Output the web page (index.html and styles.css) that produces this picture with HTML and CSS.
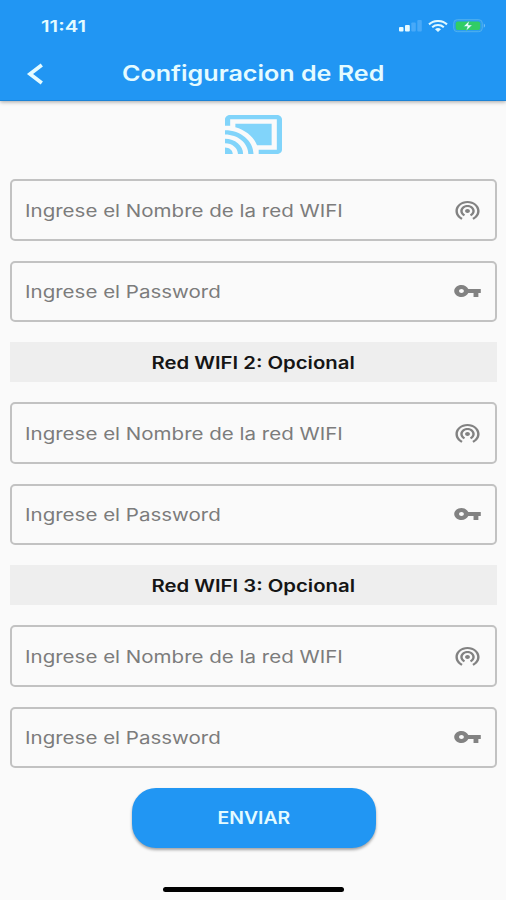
FILE: index.html
```html
<!DOCTYPE html>
<html lang="es">
<head>
<meta charset="utf-8">
<title>Configuracion de Red</title>
<link rel="stylesheet" href="styles.css">
</head>
<body>
<svg class="defs" width="0" height="0">
  <symbol id="tether" viewBox="0 0 24 24" preserveAspectRatio="none"><path d="M12 11c-1.1 0-2 .9-2 2s.9 2 2 2 2-.9 2-2-.9-2-2-2zm6 2c0-3.31-2.69-6-6-6s-6 2.69-6 6c0 2.22 1.21 4.15 3 5.190l1-1.740c-1.190-.7-2-1.970-2-3.450 0-2.210 1.790-4 4-4s4 1.790 4 4c0 1.480-.81 2.750-2 3.450l1 1.740c1.790-1.040 3-2.970 3-5.190zM12 3C6.480 3 2 7.480 2 13c0 3.700 2.010 6.920 4.990 8.650l1-1.730C5.610 18.530 4 15.960 4 13c0-4.420 3.580-8 8-8s8 3.580 8 8c0 2.960-1.610 5.530-4 6.920l1 1.730c2.990-1.730 5-4.950 5-8.650 0-5.520-4.480-10-10-10z"/></symbol>
  <symbol id="key" viewBox="0 0 24 24" preserveAspectRatio="none"><path d="M12.650 10C11.830 7.670 9.610 6 7 6c-3.310 0-6 2.690-6 6s2.690 6 6 6c2.610 0 4.830-1.670 5.650-4H17v4h4v-4h2v-4H12.650zM7 14c-1.100 0-2-.9-2-2s.9-2 2-2 2 .9 2 2-.9 2-2 2z"/></symbol>
</svg>
<div class="screen">
  <header class="appbar">
    <div class="status">
      <span class="time">11:41</span>
      <span class="indicators">
        <svg width="24" height="12" viewBox="0 0 24 12"><rect x="0" y="7" width="4.500" height="4.500" rx="1" fill="#e8faff"/><rect x="6" y="5" width="4.800" height="6.500" rx="1" fill="#e8faff"/><rect x="12.300" y="2.500" width="4.500" height="9" rx="1" fill="#48a9f8"/><rect x="18.300" y="0" width="4.500" height="11.500" rx="1" fill="#48a9f8"/></svg>
        <svg class="wifi" width="20" height="12" viewBox="0 0 20 12" fill="none" stroke="#e0f9ff" stroke-width="2.100"><path d="M1 4.400C6-.1 14-.1 19 4.400M4.200 7.200c3.300-2.900 8.300-2.900 11.600 0"/><path d="M7 9.200q3-2.200 6 0l-3 2.800z" fill="#e0f9ff" stroke="none"/></svg>
        <svg width="33" height="14" viewBox="0 0 33 14"><rect x=".7" y=".7" width="28.600" height="12" rx="3.500" fill="#2b9df0" stroke="#50b0ee"/><rect x="2.700" y="2.500" width="24.500" height="8.500" rx="2" fill="#31cd64"/><path d="M16.300 1.800 10.500 7.500h3.800l-1 4.300 6-5.900h-3.900z" fill="#e8fff8" stroke="#31b787" stroke-width=".5"/><path d="M30.800 4.600q2.500 2.100 0 4.200z" fill="#72c1f7"/></svg>
      </span>
    </div>
    <div class="nav">
      <svg class="back" width="18" height="22" viewBox="0 0 18 22"><path d="M15.800 2 4 11l11.800 9" fill="none" stroke="#e4fbff" stroke-width="3.700"/></svg>
      <h1 class="title">Configuracion de Red</h1>
    </div>
  </header>
  <main class="form">
    <svg class="cast" width="57" height="39" viewBox="1 3 22 18" preserveAspectRatio="none" fill="#81d4fa"><path d="M1 18v3h3c0-1.660-1.340-3-3-3zm0-4v2c2.760 0 5 2.240 5 5h2c0-3.870-3.130-7-7-7zm18-7H5v1.630c3.960 1.280 7.090 4.410 8.370 8.370H19V7zM1 10v2c4.970 0 9 4.030 9 9h2c0-6.080-4.930-11-11-11zm20-7H3c-1.100 0-2 .9-2 2v3h2V5h18v14h-7v2h7c1.100 0 2-.9 2-2V5c0-1.100-.9-2-2-2z"/></svg>
    <div class="field"><span class="hint">Ingrese el Nombre de la red WIFI</span><svg class="icon"><use href="#tether"/></svg></div>
    <div class="field"><span class="hint">Ingrese el Password</span><svg class="icon"><use href="#key"/></svg></div>
    <div class="band"><span class="label">Red WIFI 2: Opcional</span></div>
    <div class="field"><span class="hint">Ingrese el Nombre de la red WIFI</span><svg class="icon"><use href="#tether"/></svg></div>
    <div class="field"><span class="hint">Ingrese el Password</span><svg class="icon"><use href="#key"/></svg></div>
    <div class="band"><span class="label">Red WIFI 3: Opcional</span></div>
    <div class="field"><span class="hint">Ingrese el Nombre de la red WIFI</span><svg class="icon"><use href="#tether"/></svg></div>
    <div class="field"><span class="hint">Ingrese el Password</span><svg class="icon"><use href="#key"/></svg></div>
    <button class="send"><span class="send-label">ENVIAR</span></button>
  </main>
  <div class="home"></div>
</div>
</body>
</html>
```
FILE: styles.css
```css
* { box-sizing: border-box; }
body {
  margin: 0;
  background: #fafafa;
  font-family: Inter, "Liberation Sans", sans-serif;
}
.defs { display: block; }
.screen {
  height: 900px;
  display: flex;
  flex-direction: column;
  align-items: center;
  overflow: hidden;
}
.appbar {
  width: 100%;
  height: 101px;
  flex: none;
  background: #2196f3;
  border-bottom: 1px solid #1c83d6;
  box-shadow: 0 1px 4px rgba(0, 0, 0, .35);
  color: #e4fbff;
}
.status {
  height: 52px;
  padding: 0 20px 0 41px;
  display: flex;
  align-items: center;
  justify-content: space-between;
}
.time {
  font-size: 16px;
  font-weight: 600;
  transform: scaleX(1.27);
  transform-origin: left;
}
.indicators { display: flex; align-items: center; gap: 5px; }
.nav {
  height: 43px;
  padding-left: 26px;
  display: flex;
  align-items: center;
}
.title {
  margin: 1px 0 0 78px;
  font-size: 21px;
  line-height: 26px;
  font-weight: 600;
  white-space: nowrap;
  transform: scaleX(1.195);
  transform-origin: left;
}
.form {
  width: 100%;
  padding: 14px 9px 0 10px;
  display: flex;
  flex-direction: column;
  align-items: center;
}
.cast { margin-bottom: 25px; }
.field {
  width: 100%;
  height: 61.5px;
  margin-bottom: 20px;
  padding: 0 13px;
  display: flex;
  align-items: center;
  justify-content: space-between;
  border: 2px solid #c2c2c2;
  border-radius: 5px;
}
.hint {
  padding-top: 2px;
  font-size: 17px;
  color: #7c7c7c;
  white-space: nowrap;
  transform: scaleX(1.207);
  transform-origin: left;
}
.icon { width: 29px; height: 24px; fill: #828282; }
.icon use { width: 29px; height: 24px; }
.band {
  width: 100%;
  height: 40px;
  margin-bottom: 20px;
  padding-top: 2px;
  display: flex;
  align-items: center;
  justify-content: center;
  background: #eee;
}
.label {
  font-size: 17px;
  font-weight: 600;
  color: #151515;
  transform: scaleX(1.195);
}
.send {
  width: 244px;
  height: 60px;
  padding: 0;
  border: 0;
  border-radius: 24px;
  background: #2196f3;
  box-shadow: 0 2px 3px rgba(0, 0, 0, .35);
  color: #e4fbff;
  font-family: inherit;
}
.send-label {
  display: inline-block;
  font-size: 17px;
  font-weight: 600;
  transform: scaleX(1.14);
}
.home {
  width: 181px;
  height: 5px;
  margin-top: 39px;
  border-radius: 3px;
  background: #000;
}
```
